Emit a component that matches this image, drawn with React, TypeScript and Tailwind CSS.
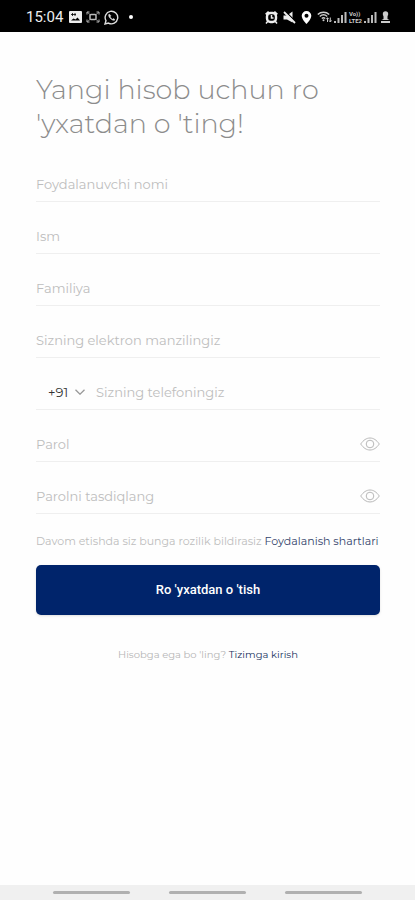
import { useState } from "react";
import type { ReactNode } from "react";

function PictureIcon() {
  return (
    <svg width="13" height="12" viewBox="0 0 13 12" aria-hidden="true">
      <rect width="13" height="12" rx="1" fill="#eee" />
      <path d="M2 9.500l2.500-2 2 1 2-2 2.500 3z" fill="#000" />
      <path d="M3.500 2v3M6 2v3M2 3.500h5" stroke="#000" strokeWidth="0.8" />
    </svg>
  );
}

function CaptureIcon() {
  return (
    <svg width="14" height="12" viewBox="0 0 14 12" fill="none" stroke="#bbb" aria-hidden="true">
      <path d="M1 3.500V1h2.500M10.500 1H13v2.500M13 8.500V11h-2.500M3.500 11H1V8.500" />
      <rect x="4" y="3.500" width="6" height="5" rx="1" strokeWidth="1.500" />
      <path d="M1.500 1.500L4 3.500M12.500 1.500L10 3.500M1.500 10.500L4 8.500M12.500 10.500L10 8.500" strokeWidth="0.7" />
    </svg>
  );
}

function WhatsAppIcon() {
  return (
    <svg width="15" height="15" viewBox="0 0 15 15" fill="none" stroke="#ddd" aria-hidden="true">
      <path d="M1 14l1-3.300A6.300 6.300 0 1 1 4.500 13.100z" strokeWidth="1.400" />
      <path
        d="M5.300 4c-1.200.8-.8 2.700 1 4.500s3.900 2.400 4.700 1.200L9.500 8.500l-1 .7C7.500 8.800 6.600 7.800 6.200 6.800l.7-1z"
        fill="#ddd"
        strokeWidth="0.5"
      />
    </svg>
  );
}

function AlarmIcon() {
  return (
    <svg width="13" height="13" viewBox="0 0 13 13" fill="none" stroke="#eee" aria-hidden="true">
      <path d="M.8 3.500L3.800.8M12.200 3.500L9.200.8" strokeWidth="2.200" />
      <rect x="2" y="2" width="9" height="9" rx="3.500" strokeWidth="2.400" />
      <path d="M6.500 4v3h2M3 10l-2 2.500M10 10l2 2.500" strokeWidth="1.500" />
    </svg>
  );
}

function MuteIcon() {
  return (
    <svg width="13" height="13" viewBox="0 0 13 13" aria-hidden="true">
      <path d="M.5 4.500h3.500L9.500.500v11L4 8.500H.5z" fill="#eee" />
      <path d="M2.500.500l10 10" stroke="#000" strokeWidth="1.200" />
      <path d="M1 1l11 11" stroke="#eee" strokeWidth="1.800" />
    </svg>
  );
}

function PinIcon() {
  return (
    <svg width="11" height="13" viewBox="0 0 11 13" aria-hidden="true">
      <path
        d="M5.500 0a4.800 4.800 0 0 0-4.800 4.800C.7 8.300 5.500 13 5.500 13s4.800-4.700 4.800-8.200A4.800 4.800 0 0 0 5.500 0z"
        fill="#fff"
      />
      <circle cx="5.500" cy="4.800" r="2" fill="#000" />
    </svg>
  );
}

function WifiIcon() {
  return (
    <svg width="15" height="12" viewBox="0 0 15 12" fill="none" stroke="#ccc" aria-hidden="true">
      <path d="M.8 3.500C4 .5 9 .5 12.200 3.500M2.800 5.500c2.200-2 5.200-2 7.400 0M4.800 7.500c1-.9 2.400-.9 3.400 0" strokeWidth="1.500" />
      <circle cx="6.500" cy="9.300" r="1" fill="#ccc" stroke="none" />
      <path d="M10.500 11V7M9.300 8.200l1.200-1.500 1.200 1.500M13.300 6.500v4M12.100 9.500l1.200 1.500 1.200-1.500" />
    </svg>
  );
}

function SignalIcon() {
  return (
    <svg width="13" height="12" viewBox="0 0 13 12" aria-hidden="true">
      <path d="M0 10h2v2H0zM3.500 7h2v5h-2zM7 4h2v8H7zM10.500 1h2v11h-2z" fill="#bbb" />
    </svg>
  );
}

function PersonIcon() {
  return (
    <svg width="9" height="12" viewBox="0 0 9 12" fill="#ccc" aria-hidden="true">
      <circle cx="4.500" cy="3" r="2.700" />
      <path d="M2.500 5h4v3l2 1H.5l2-1zM0 10h9v2H0z" />
    </svg>
  );
}

function EyeIcon() {
  return (
    <svg width="20" height="14" viewBox="0 0 20 14" fill="none" stroke="#b8b8b8" aria-hidden="true">
      <path d="M.7 7C3.500 3 6.500 1 10 1s6.500 2 9.300 6C16.500 11 13.500 13 10 13S3.500 11 .7 7z" />
      <circle cx="10" cy="7" r="3.800" />
    </svg>
  );
}

function StatusBar() {
  return (
    <header className="flex h-8 items-center justify-between bg-black pt-[2px] pr-[25px] pl-[26px] text-[#eee]">
      <div className="flex items-center gap-[6px]">
        <span className="font-[Roboto] text-[15px]">15:04</span>
        <div className="flex items-center gap-1">
          <PictureIcon />
          <CaptureIcon />
          <WhatsAppIcon />
        </div>
        <span className="ml-1 size-1 rounded-full bg-white" />
      </div>
      <div className="flex items-center gap-[2px]">
        <div className="mr-[3px] flex items-center gap-[5px]">
          <AlarmIcon />
          <MuteIcon />
          <PinIcon />
        </div>
        <WifiIcon />
        <SignalIcon />
        <span className="flex flex-col font-[Roboto] text-[6px] leading-[7px] font-bold text-[#ccc]">
          <span>Vo))</span>
          <span>LTE2</span>
        </span>
        <SignalIcon />
        <span className="ml-[2px]">
          <PersonIcon />
        </span>
      </div>
    </header>
  );
}

const inputStyle =
  "w-full min-w-0 flex-1 bg-transparent text-[13px] text-gray-700 outline-none placeholder:text-[#bdbdbd]";

function Row({ children }: { children: ReactNode }) {
  return (
    <div className="flex h-[52px] items-end border-b border-[#efefef] pb-[7px]">
      {children}
    </div>
  );
}

function TextField({ name, label, type = "text" }: { name: string; label: string; type?: string }) {
  return (
    <Row>
      <input id={name} name={name} type={type} aria-label={label} placeholder={label} className={inputStyle} />
    </Row>
  );
}

function PasswordField({ name, label }: { name: string; label: string }) {
  const [visible, setVisible] = useState(false);

  return (
    <Row>
      <input
        id={name}
        name={name}
        type={visible ? "text" : "password"}
        aria-label={label}
        placeholder={label}
        className={inputStyle}
      />
      <button type="button" aria-label={label} onClick={() => setVisible(!visible)} className="pb-[3px]">
        <EyeIcon />
      </button>
    </Row>
  );
}

export default function App() {
  return (
    <div className="flex min-h-screen flex-col bg-[#fefefe] font-['Montserrat','Inter',sans-serif]">
      <StatusBar />
      <main className="flex-1 pt-[41px] pr-[35px] pl-9">
        <h1 className="text-[27px] leading-[34px] font-light text-[#8c8c8c]">
          Yangi hisob uchun ro
          <br />
          'yxatdan o 'ting!
        </h1>
        <form className="mt-[9px]" onSubmit={(e) => e.preventDefault()}>
          <TextField name="username" label="Foydalanuvchi nomi" />
          <TextField name="firstName" label="Ism" />
          <TextField name="lastName" label="Familiya" />
          <TextField name="email" label="Sizning elektron manzilingiz" type="email" />
          <Row>
            <div className="grid w-[60px] shrink-0 items-center pl-3">
              <select
                name="code"
                aria-label="+91"
                className="col-start-1 row-start-1 appearance-none bg-transparent text-[13px] text-[#333] outline-none"
              >
                <option>+91</option>
              </select>
              <svg
                width="10"
                height="6"
                viewBox="0 0 10 6"
                fill="none"
                stroke="#999"
                strokeWidth="1.300"
                className="pointer-events-none col-start-1 row-start-1 mr-[11px] justify-self-end"
                aria-hidden="true"
              >
                <path d="M.5.700L5 5.200 9.500.700" />
              </svg>
            </div>
            <input
              id="phone"
              name="phone"
              type="tel"
              aria-label="Sizning telefoningiz"
              placeholder="Sizning telefoningiz"
              className={inputStyle}
            />
          </Row>
          <PasswordField name="password" label="Parol" />
          <PasswordField name="confirm" label="Parolni tasdiqlang" />
          <p className="mt-[19px] text-[11px] leading-4 whitespace-nowrap text-[#bdbdbd]">
            Davom etishda siz bunga rozilik bildirasiz{" "}
            <a href="#terms" className="text-[#33436b]">
              Foydalanish shartlari
            </a>
          </p>
          <button
            type="submit"
            className="mt-4 h-[50px] w-full rounded-[5px] bg-[#00246b] font-[Roboto] text-[13px] font-medium text-white shadow-sm"
          >
            Ro 'yxatdan o 'tish
          </button>
        </form>
        <p className="mt-8 text-center text-[10px] leading-4 text-[#b5b5b5]">
          Hisobga ega bo 'ling?{" "}
          <a href="#login" className="text-[#22345f]">
            Tizimga kirish
          </a>
        </p>
      </main>
      <footer className="flex h-[15px] justify-center gap-[39px] bg-[#f0f0f0] pt-[6px]">
        <span className="h-[3px] w-[77px] rounded-full bg-[#b0b0b0]" />
        <span className="h-[3px] w-[77px] rounded-full bg-[#b0b0b0]" />
        <span className="h-[3px] w-[77px] rounded-full bg-[#b0b0b0]" />
      </footer>
    </div>
  );
}
